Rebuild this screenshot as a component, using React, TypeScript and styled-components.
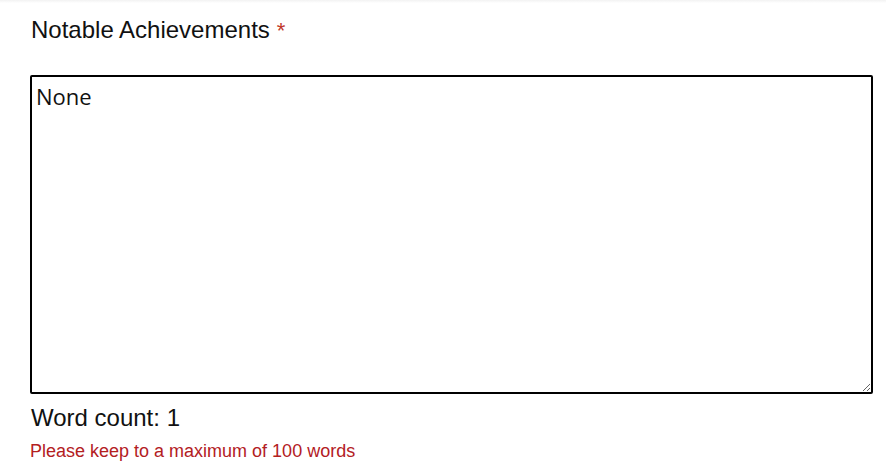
import React, { useState } from "react";
import styled, { createGlobalStyle } from "styled-components";

const GlobalStyle = createGlobalStyle`
  html, body {
    margin: 0;
    padding: 0;
    background: #fff;
  }
  body {
    font-family: "Liberation Sans", Arial, sans-serif;
    color: #111;
  }
`;

const TopRule = styled.div`
  height: 3px;
  background: linear-gradient(#f2f2f2, #fff);
`;

const Field = styled.div`
  padding: 13px 12px 0 30px;
  display: flex;
  flex-direction: column;
`;

const Label = styled.label`
  font-size: 24px;
  line-height: 28px;
  margin-left: 1px;
  color: #111;
`;

const Required = styled.span`
  color: #c0392b;
  font-size: 22px;
  margin-left: 7px;
`;

const Input = styled.textarea`
  margin-top: 30px;
  box-sizing: border-box;
  width: 843px;
  height: 319px;
  border: 2px solid #000;
  border-radius: 2px;
  padding: 5px 4px;
  font-family: "Open Sans", "Noto Sans", sans-serif;
  font-size: 22px;
  line-height: 28px;
  color: #111;
  resize: both;
  outline: none;
`;

const Count = styled.div`
  margin-top: 10px;
  font-size: 24px;
  line-height: 28px;
  margin-left: 1px;
`;

const Hint = styled.div`
  margin-top: 8px;
  font-size: 18px;
  line-height: 22px;
  color: #b3201f;
`;

export default function App() {
  const [text, setText] = useState("None");
  const words = text.trim() ? text.trim().split(/\s+/).length : 0;
  return (
    <>
      <GlobalStyle />
      <TopRule />
      <Field>
        <Label>
          Notable Achievements<Required>*</Required>
        </Label>
        <Input value={text} onChange={(e) => setText(e.target.value)} autoFocus />
        <Count>Word count: {words}</Count>
        <Hint>Please keep to a maximum of 100 words</Hint>
      </Field>
    </>
  );
}
